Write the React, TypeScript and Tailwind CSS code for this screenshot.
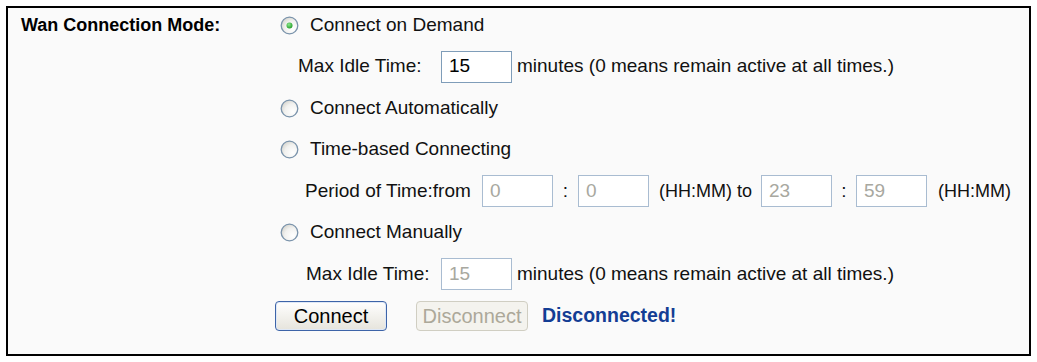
import React from "react";

function Radio({ checked = false }: { checked?: boolean }) {
  return (
    <svg width="19" height="19" viewBox="0 0 19 19" className="shrink-0">
      <defs>
        <radialGradient id="rfill" cx="0.7" cy="0.7" r="0.8">
          <stop offset="0" stopColor="#ffffff" />
          <stop offset="0.6" stopColor="#f1f1ef" />
          <stop offset="1" stopColor="#d4d3cc" />
        </radialGradient>
        <radialGradient id="rdot" cx="0.4" cy="0.35" r="0.7">
          <stop offset="0" stopColor="#8ee88e" />
          <stop offset="1" stopColor="#1f9a24" />
        </radialGradient>
      </defs>
      <circle cx="9.5" cy="9.5" r="8.3" fill="url(#rfill)" stroke="#7a93ab" strokeWidth="1.3" />
      {checked && <circle cx="9.5" cy="9.5" r="3" fill="url(#rdot)" />}
    </svg>
  );
}

function Field({ value, disabled = false }: { value: string; disabled?: boolean }) {
  return (
    <div
      className={`flex h-[32px] w-[71px] shrink-0 items-center border bg-white pl-[7px] text-[19px] ${
        disabled ? "border-[#a9bcd1] text-[#a8a8a0]" : "border-[#7f9db9] text-black"
      }`}
    >
      {value}
    </div>
  );
}

export default function App() {
  return (
    <div className="min-h-[362px] bg-white pl-[6px] pt-[6px] font-['Liberation_Sans',Arial,sans-serif] text-black">
      <div className="flex h-[350px] w-[1025px] border-2 border-black bg-[#fafafa] pt-[1px]">
        <div className="w-[267px] shrink-0 pl-[13px]">
          <div className="flex h-[32px] items-center text-[18px] font-bold">Wan Connection Mode:</div>
        </div>

        <div className="flex flex-col gap-[9.5px] text-[19px] text-[#111]">
          <div className="flex h-[32px] items-center">
            <span className="ml-[5px]">
              <Radio checked />
            </span>
            <span className="ml-[11px]">Connect on Demand</span>
          </div>

          <div className="flex h-[32px] items-center">
            <span className="ml-[23px] w-[143px] shrink-0">Max Idle Time:</span>
            <Field value="15" />
            <span className="ml-[5px]">minutes (0 means remain active at all times.)</span>
          </div>

          <div className="flex h-[32px] items-center">
            <span className="ml-[5px]">
              <Radio />
            </span>
            <span className="ml-[11px]">Connect Automatically</span>
          </div>

          <div className="flex h-[32px] items-center">
            <span className="ml-[5px]">
              <Radio />
            </span>
            <span className="ml-[11px]">Time-based Connecting</span>
          </div>

          <div className="flex h-[32px] items-center">
            <span className="ml-[30px] w-[177px] shrink-0">Period of Time:from</span>
            <Field value="0" disabled />
            <span className="w-[25px] shrink-0 text-center">:</span>
            <Field value="0" disabled />
            <span className="ml-[10px] w-[102px] shrink-0 text-[18px]">(HH:MM) to</span>
            <Field value="23" disabled />
            <span className="w-[24px] shrink-0 text-center">:</span>
            <Field value="59" disabled />
            <span className="ml-[11px] text-[18px]">(HH:MM)</span>
          </div>

          <div className="flex h-[32px] items-center">
            <span className="ml-[5px]">
              <Radio />
            </span>
            <span className="ml-[11px]">Connect Manually</span>
          </div>

          <div className="flex h-[32px] items-center">
            <span className="ml-[31px] w-[135px] shrink-0">Max Idle Time:</span>
            <Field value="15" disabled />
            <span className="ml-[5px]">minutes (0 means remain active at all times.)</span>
          </div>

          <div className="flex h-[32px] items-center">
            <button className="flex h-[30px] w-[112px] items-center justify-center rounded-[4px] border border-[#3d64a8] bg-gradient-to-b from-white to-[#e6e4dc] text-[20px] text-black shadow-[inset_0_0_0_1px_#dfe8f6]">
              Connect
            </button>
            <button
              disabled
              className="ml-[29px] flex h-[30px] w-[112px] items-center justify-center rounded-[4px] border border-[#d0cec2] bg-[#f4f3ee] text-[20px] text-[#aca899]"
            >
              Disconnect
            </button>
            <span className="ml-[14px] text-[19.5px] font-bold text-[#133d94]">Disconnected!</span>
          </div>
        </div>
      </div>
    </div>
  );
}
